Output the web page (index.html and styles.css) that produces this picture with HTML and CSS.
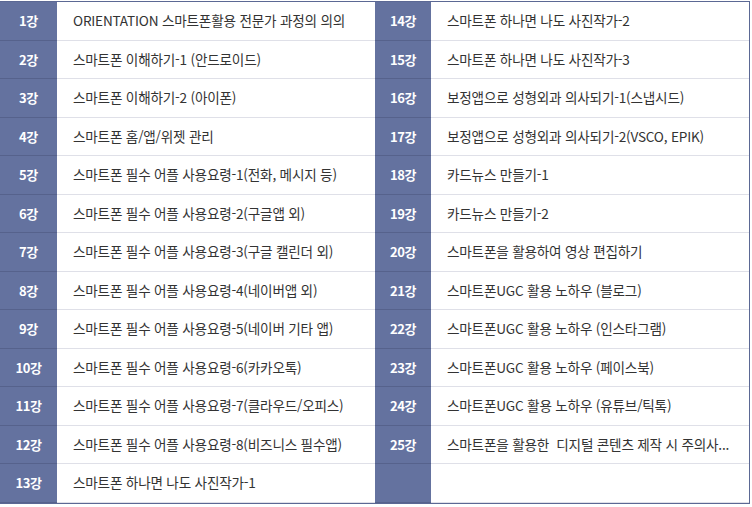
FILE: index.html
```html
<!DOCTYPE html>
<html lang="ko">
<head>
<meta charset="utf-8">
<link rel="stylesheet" href="styles.css">
</head>
<body>
<div class="wrap">
  <div class="table">
    <div class="lab">1강</div><div class="txt">ORIENTATION 스마트폰활용 전문가 과정의 의의</div>
    <div class="lab">14강</div><div class="txt">스마트폰 하나면 나도 사진작가-2</div>
    <div class="lab">2강</div><div class="txt">스마트폰 이해하기-1 (안드로이드)</div>
    <div class="lab">15강</div><div class="txt">스마트폰 하나면 나도 사진작가-3</div>
    <div class="lab">3강</div><div class="txt">스마트폰 이해하기-2 (아이폰)</div>
    <div class="lab">16강</div><div class="txt">보정앱으로 성형외과 의사되기-1(스냅시드)</div>
    <div class="lab">4강</div><div class="txt">스마트폰 홈/앱/위젯 관리</div>
    <div class="lab">17강</div><div class="txt">보정앱으로 성형외과 의사되기-2(VSCO, EPIK)</div>
    <div class="lab">5강</div><div class="txt">스마트폰 필수 어플 사용요령-1(전화, 메시지 등)</div>
    <div class="lab">18강</div><div class="txt">카드뉴스 만들기-1</div>
    <div class="lab">6강</div><div class="txt">스마트폰 필수 어플 사용요령-2(구글앱 외)</div>
    <div class="lab">19강</div><div class="txt">카드뉴스 만들기-2</div>
    <div class="lab">7강</div><div class="txt">스마트폰 필수 어플 사용요령-3(구글 캘린더 외)</div>
    <div class="lab">20강</div><div class="txt">스마트폰을 활용하여 영상 편집하기</div>
    <div class="lab">8강</div><div class="txt">스마트폰 필수 어플 사용요령-4(네이버앱 외)</div>
    <div class="lab">21강</div><div class="txt">스마트폰UGC 활용 노하우 (블로그)</div>
    <div class="lab">9강</div><div class="txt">스마트폰 필수 어플 사용요령-5(네이버 기타 앱)</div>
    <div class="lab">22강</div><div class="txt">스마트폰UGC 활용 노하우 (인스타그램)</div>
    <div class="lab">10강</div><div class="txt">스마트폰 필수 어플 사용요령-6(카카오톡)</div>
    <div class="lab">23강</div><div class="txt">스마트폰UGC 활용 노하우 (페이스북)</div>
    <div class="lab">11강</div><div class="txt">스마트폰 필수 어플 사용요령-7(클라우드/오피스)</div>
    <div class="lab">24강</div><div class="txt">스마트폰UGC 활용 노하우 (유튜브/틱톡)</div>
    <div class="lab">12강</div><div class="txt">스마트폰 필수 어플 사용요령-8(비즈니스 필수앱)</div>
    <div class="lab">25강</div><div class="txt" title="스마트폰을 활용한 디지털 콘텐츠 제작 시 주의사항">스마트폰을 활용한&nbsp; 디지털 콘텐츠 제작 시 주의사...</div>
    <div class="lab">13강</div><div class="txt">스마트폰 하나면 나도 사진작가-1</div>
    <div class="lab"></div><div class="txt"></div>
  </div>
</div>
</body>
</html>
```

FILE: styles.css
```css
html, body {
  margin: 0;
  padding: 0;
  background: #ffffff;
}
.wrap {
  padding-top: 1px;
  width: 750px;
}
.table {
  display: grid;
  grid-template-columns: 57px 318px 56px 318px;
  grid-auto-rows: 38.5px;
  border-top: 1px solid #5b6894;
  border-right: 1px solid #5b6894;
  border-bottom: 1px solid #5b6894;
  font-family: "Noto Sans CJK KR", "Noto Sans", sans-serif;
  font-size: 13.6px;
  letter-spacing: -0.2px;
}
.lab {
  background: #64729f;
  color: #ffffff;
  font-weight: 700;
  font-size: 13px;
  letter-spacing: -0.4px;
  display: flex;
  align-items: center;
  justify-content: center;
  border-bottom: 1px solid #56628c;
  box-sizing: border-box;
}
.txt {
  background: #ffffff;
  color: #333333;
  display: block;
  padding: 0 6px 0 16px;
  border-bottom: 1px solid #dfe0e8;
  box-sizing: border-box;
  min-width: 0;
  white-space: nowrap;
  overflow: hidden;
  line-height: 37.5px;
}
```
